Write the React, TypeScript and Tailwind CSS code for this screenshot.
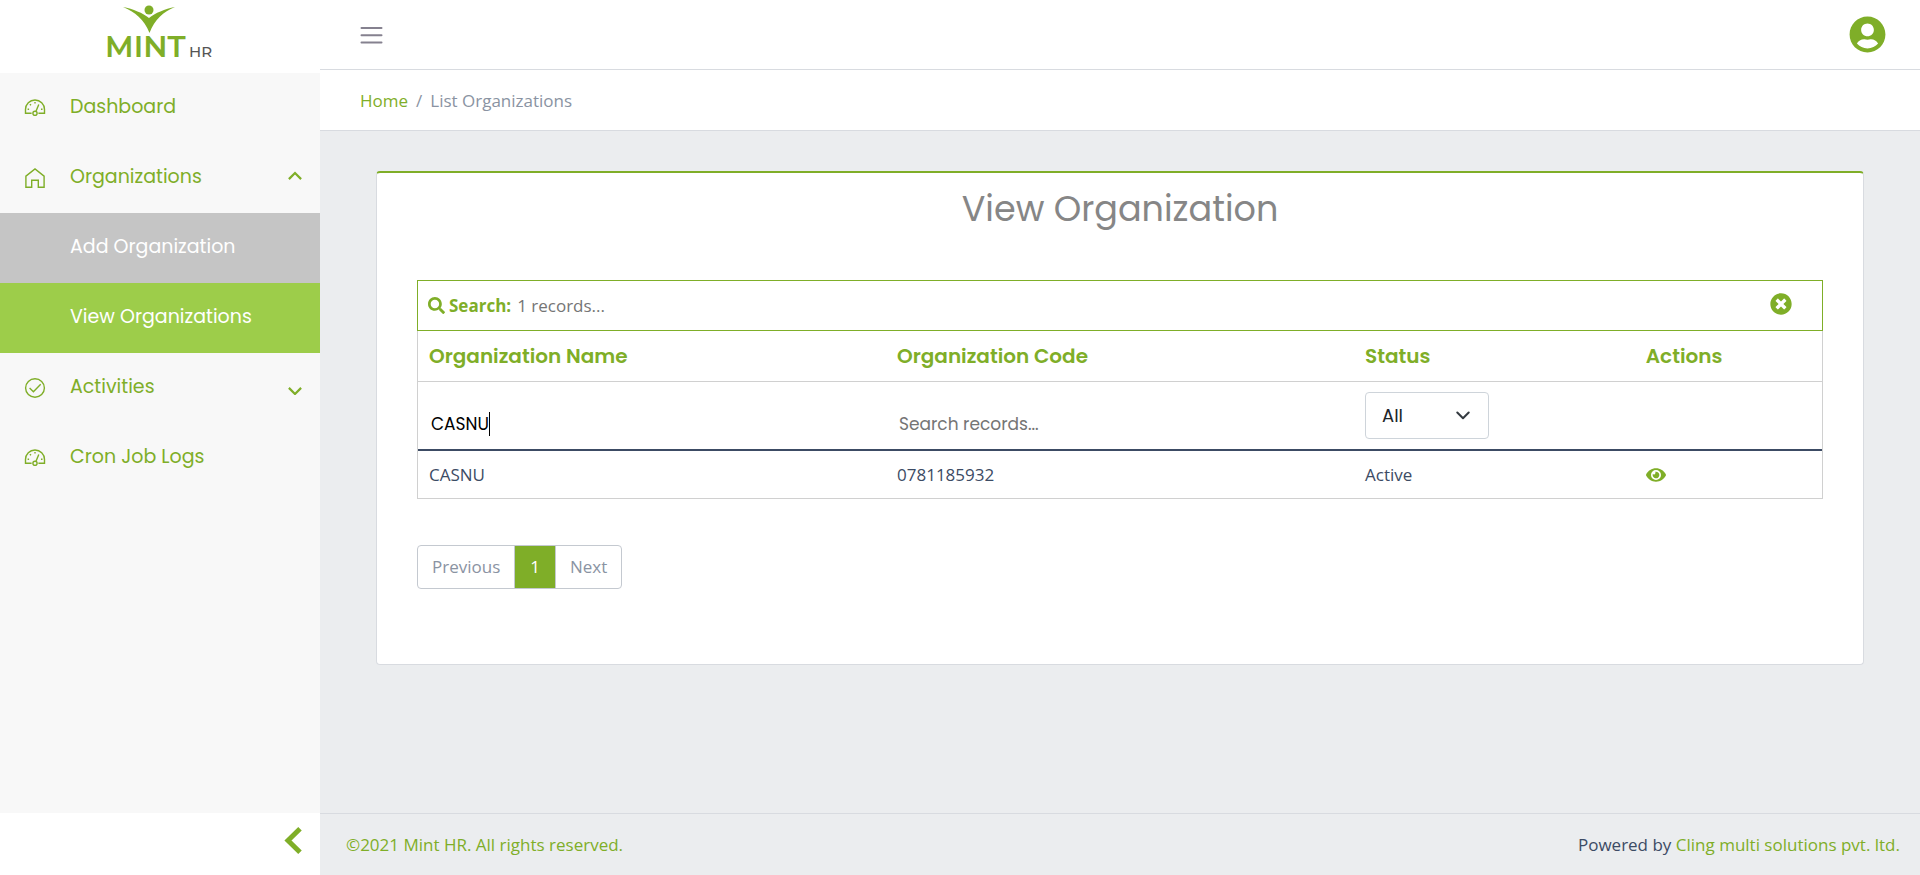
import { useState } from "react";
import type { ReactNode } from "react";
import { FaEye, FaSearch, FaTimesCircle, FaUserCircle } from "react-icons/fa";

const display = "font-['Poppins','Inter',sans-serif]";

function Logo() {
  return (
    <svg width="120" height="70" viewBox="-6 0 120 70" role="img" aria-label="Mint HR">
      <circle cx="43" cy="8" r="4.5" fill="#7fae28" />
      <path
        d="M17 5 C27 7 37 11 43 16 C49 11 59 7 69 5 C57 10 49 17 43.5 31 C38 17 29 10 17 5 Z"
        fill="#7fae28"
      />
      <text
        x="-1"
        y="55"
        fontFamily="Montserrat, Poppins, sans-serif"
        fontSize="30"
        fontWeight="600"
        fill="#7fae28"
      >
        MINT
      </text>
      <text
        x="83"
        y="55"
        fontFamily="Montserrat, Poppins, sans-serif"
        fontSize="15"
        fontWeight="500"
        fill="#555555"
      >
        HR
      </text>
    </svg>
  );
}

function SpeedometerIcon() {
  return (
    <svg width="22" height="20" viewBox="0 0 22 20" fill="none" stroke="currentColor" strokeWidth="1.4">
      <path d="M7.6 15.3H1.5V11.5a9.5 9.5 0 0 1 19 0v3.8h-6.1" />
      <circle cx="11" cy="15.3" r="2.1" />
      <path d="M12 13.3 14.8 6.6" />
      <path d="M3.6 11.2h1.5M17 11.2h1.5M5.9 6.2l1.1 1.1M11 4v1.5" />
    </svg>
  );
}

function HomeIcon() {
  return (
    <svg width="22" height="20" viewBox="0 0 22 20" fill="none" stroke="currentColor" strokeWidth="1.4">
      <path d="M1.9 19.2V8.1L11 .9l9.1 7.2v11.1h-5.8v-7h-6.6v7z" />
    </svg>
  );
}

function CheckCircleIcon() {
  return (
    <svg width="22" height="20" viewBox="0 0 22 20" fill="none" stroke="currentColor" strokeWidth="1.4">
      <ellipse cx="11" cy="10" rx="9.4" ry="9.2" />
      <path d="M5.6 10.1 9.4 13.7 16.7 6.3" />
    </svg>
  );
}

function Chevron({ up = false }: { up?: boolean }) {
  return (
    <svg width="14" height="16" viewBox="0 0 14 16" fill="none" stroke="currentColor" strokeWidth="2.2">
      <path d={up ? "M.9 10.1 7 4 13.1 10.1" : "M.9 8.9 7 15 13.1 8.9"} />
    </svg>
  );
}

function NavItem({
  icon,
  label,
  tone = "plain",
  trailing,
}: {
  icon?: ReactNode;
  label: string;
  tone?: "plain" | "muted" | "active";
  trailing?: ReactNode;
}) {
  const tones = {
    plain: "text-[#7fae28]",
    muted: "bg-[#c5c5c5] text-white",
    active: "bg-[#9dcd4a] text-white",
  };
  return (
    <li>
      <a href="#" className={`flex h-[70px] items-center pb-0.5 pl-6 pr-[18px] ${tones[tone]}`}>
        <span className="mt-0.5 w-[46px]">{icon}</span>
        <span className={`flex-1 text-[19px] leading-7 ${display}`}>{label}</span>
        {trailing}
      </a>
    </li>
  );
}

const columns = ["Organization Name", "Organization Code", "Status", "Actions"];
const cell = "border-b border-[#d0d0d0] px-[11px] text-left";

export default function App() {
  const [name, setName] = useState("CASNU");
  const [code, setCode] = useState("");

  return (
    <div className="flex min-h-screen bg-[#ebedef] font-['Segoe_UI','Open_Sans',sans-serif] text-[17px] leading-6 text-[#3c4b64]">
      <aside className="flex w-80 shrink-0 flex-col bg-[#f8f8f8]">
        <div className="flex h-[73px] justify-center bg-white pt-0.5">
          <Logo />
        </div>
        <nav className="flex-1" aria-label="Main">
          <ul>
            <NavItem icon={<SpeedometerIcon />} label="Dashboard" />
            <NavItem icon={<HomeIcon />} label="Organizations" trailing={<Chevron up />} />
            <NavItem label="Add Organization" tone="muted" />
            <NavItem label="View Organizations" tone="active" />
            <NavItem icon={<CheckCircleIcon />} label="Activities" trailing={<Chevron />} />
            <NavItem icon={<SpeedometerIcon />} label="Cron Job Logs" />
          </ul>
        </nav>
        <button
          type="button"
          aria-label="Collapse sidebar"
          className="flex h-[62px] items-center justify-end bg-white pb-2 pr-[18px] text-[#7fae28]"
        >
          <svg width="18" height="27" viewBox="0 0 18 27" fill="none" stroke="currentColor" strokeWidth="5">
            <path d="M16 1.8 4 13.5 16 25.2" />
          </svg>
        </button>
      </aside>

      <div className="flex min-w-0 flex-1 flex-col">
        <header className="bg-white">
          <div className="flex h-[70px] items-center justify-between border-b border-[#d8dbe0] pl-10 pr-[34px]">
            <button type="button" aria-label="Toggle sidebar" className="text-[#85818f]">
              <svg width="23" height="18" viewBox="0 0 23 18" stroke="currentColor" strokeWidth="2" strokeLinecap="round">
                <path d="M1.5 2h20M1.5 9.3h20M1.5 16.5h20" />
              </svg>
            </button>
            <button type="button" aria-label="Account" className="text-[37px] text-[#7fae28]">
              <FaUserCircle />
            </button>
          </div>
          <nav aria-label="Breadcrumb" className="flex h-[61px] items-center border-b border-[#d8dbe0] pl-10 pt-0.5">
            <ol className="flex gap-2 text-[#8a93a2]">
              <li>
                <a href="#" className="text-[#7fae28]">Home</a>
              </li>
              <li aria-hidden="true">/</li>
              <li>List Organizations</li>
            </ol>
          </nav>
        </header>

        <main className="flex-1 px-14 pt-10">
          <section className="rounded border border-t-2 border-[#d8dbe0] border-t-[#7fae28] bg-white px-10 pb-[75px]">
            <h1 className={`pt-3 text-center text-[35px] leading-[48px] text-[#868686] ${display}`}>
              View Organization
            </h1>

            <div className="mt-[47px] flex h-[51px] items-center border border-[#7fae28] pl-2.5 pr-[30px]">
              <label htmlFor="search" className="flex items-center gap-1 font-bold text-[#7fae28]">
                <FaSearch />
                Search:
              </label>
              <input
                id="search"
                placeholder="1 records..."
                className="ml-1.5 flex-1 outline-none placeholder:text-[#757575]"
              />
              <button type="button" aria-label="Clear search" className="pb-1 text-[22px] text-[#7fae28]">
                <FaTimesCircle />
              </button>
            </div>

            <table className="w-full table-fixed border-separate border-spacing-0 border-x border-[#d0d0d0]">
              <colgroup>
                <col className="w-1/3" />
                <col className="w-1/3" />
                <col className="w-1/5" />
                <col />
              </colgroup>
              <thead>
                <tr className="h-[51px]">
                  {columns.map((c) => (
                    <th key={c} scope="col" className={`${cell} text-xl font-semibold text-[#7fae28] ${display}`}>
                      {c}
                    </th>
                  ))}
                </tr>
                <tr className="h-[69px]">
                  <td className="border-b-2 border-[#3c4b64] px-[13px]">
                    <div className="flex items-center pt-4">
                      <input
                        aria-label="Filter by organization name"
                        value={name}
                        onChange={(e) => setName(e.target.value)}
                        className={`field-sizing-content text-[17px] text-black outline-none ${display}`}
                      />
                      <span aria-hidden="true" className="h-6 w-px bg-black" />
                    </div>
                  </td>
                  <td className="border-b-2 border-[#3c4b64] px-[13px]">
                    <div className="flex pt-4">
                      <input
                        aria-label="Filter by organization code"
                        placeholder="Search records..."
                        value={code}
                        onChange={(e) => setCode(e.target.value)}
                        className={`w-full text-[17px] text-black outline-none placeholder:text-[#757575] ${display}`}
                      />
                    </div>
                  </td>
                  <td className="border-b-2 border-[#3c4b64] px-[11px]">
                    <div className="relative w-[124px]">
                      <select
                        aria-label="Filter by status"
                        className={`block h-[47px] w-full appearance-none rounded border border-[#ced4da] bg-white pl-4 text-lg text-[#212529] ${display}`}
                      >
                        <option>All</option>
                        <option>Active</option>
                        <option>Inactive</option>
                      </select>
                      <svg
                        className="pointer-events-none absolute right-[19px] top-[19px] text-[#343a40]"
                        width="14"
                        height="9"
                        viewBox="0 0 14 9"
                        fill="none"
                        stroke="currentColor"
                        strokeWidth="2"
                        strokeLinecap="round"
                        strokeLinejoin="round"
                      >
                        <path d="M1.3 1.5 7 7.2 12.7 1.5" />
                      </svg>
                    </div>
                  </td>
                  <td className="border-b-2 border-[#3c4b64]" />
                </tr>
              </thead>
              <tbody>
                <tr className="h-12">
                  <td className={cell}>CASNU</td>
                  <td className={cell}>0781185932</td>
                  <td className={cell}>Active</td>
                  <td className={cell}>
                    <button type="button" aria-label="View CASNU" className="block text-xl text-[#7fae28]">
                      <FaEye />
                    </button>
                  </td>
                </tr>
              </tbody>
            </table>

            <nav aria-label="Pagination" className="mt-[46px] flex">
              <div className="flex h-11 divide-x divide-[#c4c9d0] overflow-hidden rounded border border-[#c4c9d0] text-[#8a93a2]">
                <button type="button" className="px-3.5">Previous</button>
                <button type="button" aria-current="page" className="bg-[#7fae28] px-[15px] text-white">1</button>
                <button type="button" className="px-3.5">Next</button>
              </div>
            </nav>
          </section>
        </main>

        <footer className="flex h-[62px] items-center justify-between border-t border-[#d8dbe0] pl-[26px] pr-5">
          <a href="#" className="text-[#7fae28]">©2021 Mint HR. All rights reserved.</a>
          <span>
            Powered by <a href="#" className="text-[#7fae28]">Cling multi solutions pvt. ltd.</a>
          </span>
        </footer>
      </div>
    </div>
  );
}
